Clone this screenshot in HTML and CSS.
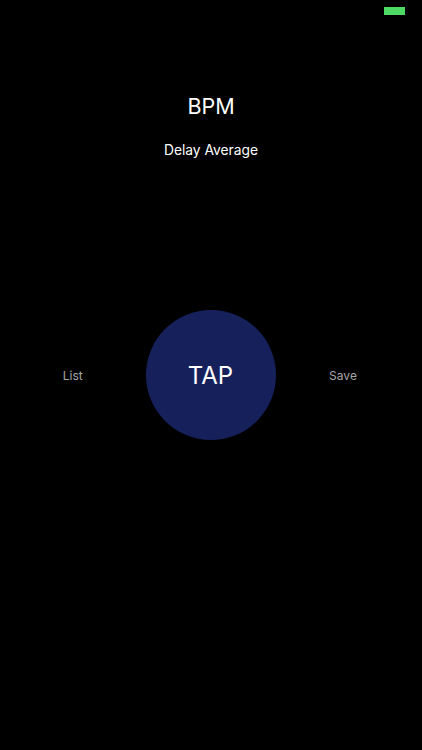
FILE: index.html
```html
<!DOCTYPE html>
<html lang="en">
<head>
    <meta charset="UTF-8">
    <meta name="viewport" content="width=device-width, initial-scale=1.0">
    <title>BPM</title>
    <link rel="stylesheet" href="styles.css">
</head>
<body>
<div class="screen">
    <div class="status-bar">
        <span class="battery"></span>
    </div>
    <header class="readout">
        <h1 class="bpm">BPM</h1>
        <p class="delay">Delay Average</p>
    </header>
    <div class="controls">
        <button class="side-button">List</button>
        <button class="tap-button">TAP</button>
        <button class="side-button save-button">Save</button>
    </div>
</div>
</body>
</html>
```

FILE: styles.css
```css
/* Global Styles */
body {
    margin: 0;
    padding: 0;
    background-color: #000;
    font-family: 'Inter', 'Liberation Sans', sans-serif;
}

.screen {
    width: 422px;
    height: 750px;
    overflow: hidden;
}

.status-bar {
    display: flex;
    justify-content: flex-end;
    height: 15px;
    padding: 7px 17px 0 0;
    box-sizing: border-box;
}

.battery {
    width: 21px;
    height: 8px;
    background-color: #4cd964;
}

.readout {
    text-align: center;
    color: #fff;
}

.bpm {
    margin: 77px 0 0;
    font-size: 21.5px;
    line-height: 28px;
    font-weight: 400;
}

.delay {
    margin: 21px 0 0;
    font-size: 13.8px;
    line-height: 18px;
}

.controls {
    display: grid;
    grid-template-columns: 145.5px 130px 146.5px;
    align-items: center;
    margin-top: 151px;
}

.side-button {
    padding: 0;
    border: none;
    background: none;
    color: #a6a6a6;
    font-family: inherit;
    font-size: 12px;
}

.save-button {
    padding-right: 11.5px;
}

.tap-button {
    width: 130px;
    height: 130px;
    padding: 0;
    border: none;
    border-radius: 50%;
    background-color: #16215c;
    color: #fff;
    font-family: inherit;
    font-size: 24px;
}
```
